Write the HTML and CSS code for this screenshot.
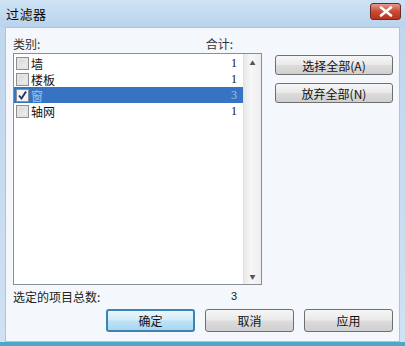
FILE: index.html
```html
<!DOCTYPE html>
<html lang="zh">
<head>
<meta charset="utf-8">
<title>过滤器</title>
<link rel="stylesheet" href="styles.css">
</head>
<body>
<div class="window">
  <div class="titlebar">
    <span class="title">过滤器</span>
    <span class="close">
      <svg width="14" height="11" viewBox="0 0 14 11"><path d="M2 1.5 L12 9.5 M12 1.5 L2 9.5" stroke="#fff" stroke-width="2.6" stroke-linecap="round"/></svg>
    </span>
  </div>
  <div class="client">
    <div class="main">
      <div class="leftcol">
        <div class="heads"><span>类别:</span><span class="sum">合计:</span></div>
        <div class="listbox">
          <div class="rows">
            <div class="row"><span class="cb"></span><span class="name">墙</span><span class="num">1</span></div>
            <div class="row"><span class="cb"></span><span class="name">楼板</span><span class="num">1</span></div>
            <div class="row sel"><span class="cb on"><svg width="11" height="11" viewBox="0 0 11 11"><path d="M2 5.5 L4.5 8.5 L9 1.5" fill="none" stroke="#1a2f6e" stroke-width="1.8"/></svg></span><span class="name">窗</span><span class="num">3</span></div>
            <div class="row"><span class="cb"></span><span class="name">轴网</span><span class="num">1</span></div>
          </div>
          <div class="scroll">
            <span class="arr">▲</span>
            <span class="arr">▼</span>
          </div>
        </div>
        <div class="total"><span>选定的项目总数:</span><span class="tnum">3</span></div>
      </div>
      <div class="rightcol">
        <button class="btn wide">选择全部(A)</button>
        <button class="btn wide">放弃全部(N)</button>
      </div>
    </div>
    <div class="footer">
      <button class="btn foot default">确定</button>
      <button class="btn foot">取消</button>
      <button class="btn foot">应用</button>
    </div>
  </div>
</div>
</body>
</html>
```
FILE: styles.css
```css
* { box-sizing: border-box; }
html, body { margin: 0; padding: 0; }
body {
  width: 405px; height: 346px; overflow: hidden;
  font-family: "Noto Sans CJK SC", "Noto Sans", sans-serif;
  font-size: 12px; color: #111;
  background: #fff;
}
.window {
  width: 405px; height: 346px;
  display: flex; flex-direction: column;
  background: linear-gradient(#bfd6ee, #cfe1f3);
  border-bottom: 4px solid #4aa9c9;
}
.titlebar {
  height: 27px; flex: none;
  display: flex; align-items: center; justify-content: space-between;
  padding: 0 4px 0 6px;
  background: linear-gradient(#cfe2f5, #b9d3ec);
}
.title { font-size: 13px; color: #0a0a0a; letter-spacing: 0.5px; }
.close {
  width: 31px; height: 17px; margin-top: -4px;
  display: flex; align-items: center; justify-content: center;
  border: 1px solid #6b2a22; border-radius: 3px;
  background: linear-gradient(#e49a8c, #c94a36 50%, #b8321f);
}
.client {
  flex: 1;
  margin: 0 5px 0 5px;
  background: #f4f7fb;
  border: 1px solid #b0c4d9;
  display: flex; flex-direction: column;
  padding: 0 6px 0 7px;
}
.main { display: flex; gap: 13px; }
.leftcol { width: 250px; display: flex; flex-direction: column; }
.heads {
  height: 25px; display: flex; align-items: flex-end; justify-content: space-between;
  padding: 0 29px 1px 0; color: #333;
}
.listbox {
  height: 232px; border: 1px solid #8a8e95; background: #fff;
  display: flex;
}
.rows { flex: 1; padding-top: 1px; }
.row {
  height: 16px; display: flex; align-items: center; padding-left: 2px;
}
.cb {
  width: 13px; height: 13px; border: 1px solid #8e8f8f;
  background: linear-gradient(135deg, #d4d4d4, #f4f4f4);
  box-shadow: inset 0 0 0 2px #e4e4e4;
  display: flex; align-items: center; justify-content: center;
}
.cb.on { background: #f4f4f4; box-shadow: none; }
.name { margin-left: 2px; flex: 1; }
.num { width: 20px; text-align: right; padding-right: 6px; font-family: "Liberation Serif", serif; font-size: 12px; }
.row.sel { background: #3673c2; }
.row.sel .name, .row.sel .num { color: #9fc3ee; }
.scroll {
  width: 18px; background: linear-gradient(90deg, #e8e8e8, #f7f7f7 40%, #eeeeee);
  border-left: 1px solid #e2e2e2;
  display: flex; flex-direction: column; justify-content: space-between; align-items: center;
  padding: 4px 0 2px;
}
.arr { font-size: 6px; color: #555; line-height: 10px; }
.total {
  height: 22px; display: flex; align-items: center; justify-content: space-between;
  padding-right: 25px; color: #222;
}
.tnum { font-family: "Liberation Sans", sans-serif; font-size: 11px; }
.rightcol {
  padding-top: 27px; display: flex; flex-direction: column; gap: 8px;
}
.btn {
  font-family: "Noto Sans CJK SC", "Noto Sans", sans-serif; font-size: 12px; color: #111;
  border: 1px solid #6f6f6f; border-radius: 3px;
  background: linear-gradient(#f6f6f6, #e9e9e9 48%, #dcdcdc 52%, #cfcfcf);
  padding: 0; display: flex; align-items: center; justify-content: center;
}
.wide { width: 118px; height: 20px; }
.footer {
  display: flex; gap: 10px; justify-content: flex-end; padding: 2px 0 0 0;
}
.foot { width: 89px; height: 23px; }
.default {
  border: 2px solid #3b83b5;
  background: linear-gradient(#e8f5fd, #d3ecf9 48%, #bfe2f5 52%, #a9d7f0);
}
```
